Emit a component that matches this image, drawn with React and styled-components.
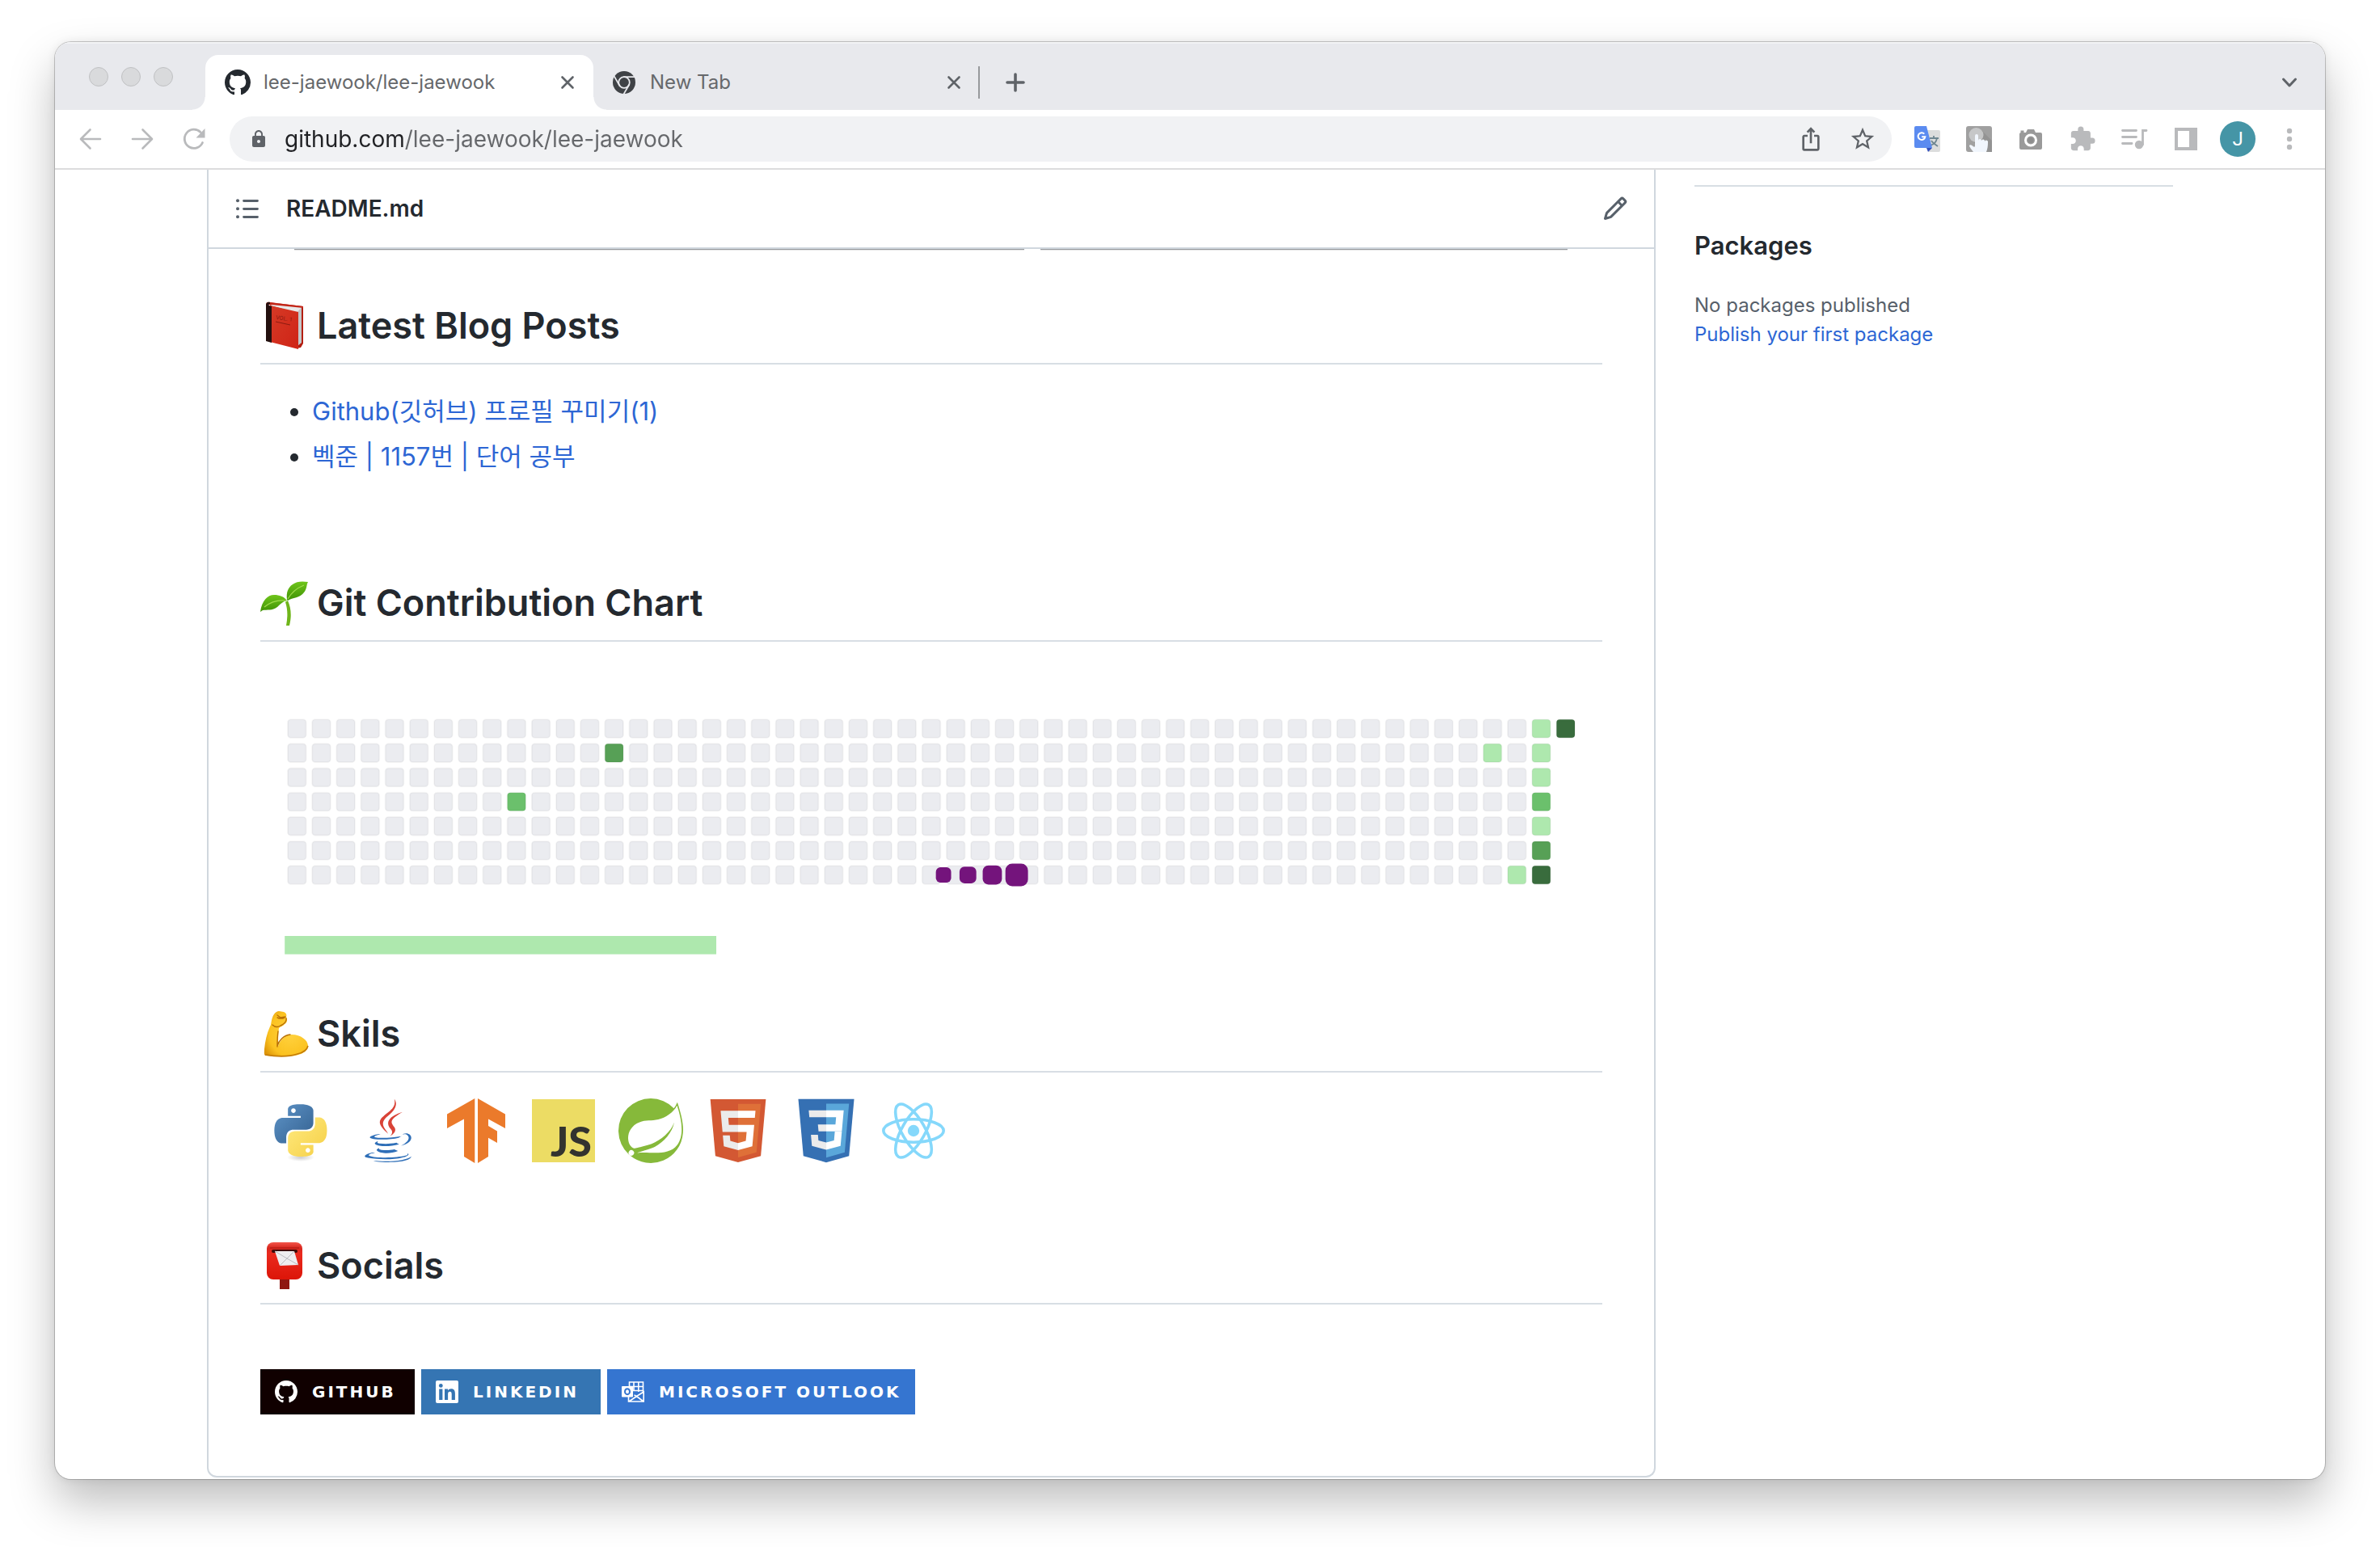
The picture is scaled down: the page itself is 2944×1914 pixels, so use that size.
import React from "react";
import styled, { createGlobalStyle } from "styled-components";
import { MdExtension, MdIosShare, MdLock, MdStarBorder } from "react-icons/md";
import { SiSpring } from "react-icons/si";

const color = {
  ink: "#24292f",
  muted: "#57606a",
  link: "#2d66d4",
  line: "#d8dee4",
  boxLine: "#d0d7de",
  chrome: "#e8e9ed",
  chromeText: "#66686b",
  chromeIcon: "#5f6368",
  chromeIdle: "#b9babc",
};

const GlobalStyle = createGlobalStyle`
  * { box-sizing: border-box; }
  body {
    margin: 0;
    background: #fff;
    color: ${color.ink};
    font-family: Inter, "Noto Sans CJK KR", "Noto Sans", sans-serif;
    overflow: hidden;
  }
  button { padding: 0; border: 0; background: none; color: inherit; font: inherit; cursor: pointer; }
  h1, h2, ul, p { margin: 0; padding: 0; }
  svg { display: block; flex: none; overflow: visible; }
`;

/* ---------- browser window ---------- */

const Desktop = styled.div`
  padding: 52px 68px 84px;
`;

const Window = styled.div`
  overflow: hidden;
  border-radius: 20px;
  background: #fff;
  box-shadow: 0 0 0 1px rgba(0, 0, 0, 0.2), 0 0 12px rgba(0, 0, 0, 0.08), 0 28px 56px rgba(0, 0, 0, 0.26);
`;

const TabStrip = styled.header`
  display: flex;
  align-items: center;
  height: 84px;
  padding-left: 42px;
  padding-right: 12px;
  background: ${color.chrome};
  color: ${color.chromeText};
  box-shadow: inset 0 2px 0 #f2f3f5;
`;

const Lights = styled.div`
  display: flex;
  gap: 16px;
  margin-top: 2px;
  margin-right: 40px;
`;

const Light = styled.button`
  width: 24px;
  height: 24px;
  && { border: 1px solid #c0c1c3; background: #d9dadc; }
  border-radius: 50%;
`;

const Tab = styled.div`
  position: relative;
  display: flex;
  align-items: center;
  align-self: flex-end;
  gap: 16px;
  width: ${(p) => (p.$active ? 480 : 478)}px;
  height: 68px;
  padding: 0 24px;
  border-radius: 16px 16px 0 0;
  background: ${(p) => (p.$active ? "#fff" : "transparent")};
  font-size: 24px;
  line-height: 32px;

  &::before,
  &::after {
    content: "";
    display: ${(p) => (p.$active ? "block" : "none")};
    position: absolute;
    bottom: 0;
    width: 16px;
    height: 16px;
  }
  &::before { left: -16px; background: radial-gradient(circle at 0 0, transparent 15px, #fff 16px); }
  &::after { right: -16px; background: radial-gradient(circle at 100% 0, transparent 15px, #fff 16px); }
`;

const TabTitle = styled.button`
  flex: 1;
  text-align: left;
  white-space: nowrap;
`;

const TabDivider = styled.span`
  width: 2px;
  height: 40px;
  margin-top: 16px;
  margin-left: -2px;
  background: #97999c;
`;

const StripButton = styled.button`
  display: grid;
  place-items: center;
  width: 64px;
  height: 68px;
  margin-top: 16px;
  margin-left: ${(p) => (p.$end ? "auto" : "12px")};
`;

const Toolbar = styled.div`
  display: flex;
  align-items: center;
  height: 74px;
  padding: 0 12px;
  border-bottom: 2px solid #dcdcdd;
`;

const ToolButton = styled.button`
  display: grid;
  place-items: center;
  flex: none;
  width: 64px;
  height: 56px;
  && { color: ${(p) => (p.$strong ? color.chromeIcon : color.chromeIdle)}; }
`;

const AddressBar = styled.label`
  display: flex;
  align-items: center;
  flex: 1;
  height: 56px;
  margin: 0 12px;
  padding: 0 4px 0 24px;
  border-radius: 28px;
  background: #f1f2f4;
  color: ${color.chromeIcon};
`;

const AddressInput = styled.input`
  flex: 1;
  min-width: 0;
  height: 40px;
  margin-left: 20px;
  padding: 0;
  border: 0;
  outline: 0;
  font: inherit;
  font-size: 28px;
  color: transparent;
  background: linear-gradient(90deg, #202124 148px, #66686b 148px);
  -webkit-background-clip: text;
  background-clip: text;
`;

const Avatar = styled.span`
  display: grid;
  place-items: center;
  width: 44px;
  height: 44px;
  border-radius: 50%;
  background: #4595a6;
  color: #fff;
  font: 24px/44px Roboto, sans-serif;
`;

/* ---------- page ---------- */

const Page = styled.div`
  display: grid;
  grid-template-columns: minmax(0, 1fr) 592px;
  column-gap: 48px;
  padding: 0 188px 2px;
`;

const Readme = styled.main`
  border: 2px solid ${color.boxLine};
  border-top: 0;
  border-radius: 0 0 12px 12px;
`;

const ReadmeBar = styled.div`
  display: flex;
  align-items: center;
  gap: 32px;
  height: 98px;
  padding: 0 32px;
  border-bottom: 2px solid ${color.boxLine};
`;

const FileName = styled.h1`
  flex: 1;
  font-size: 28px;
  line-height: 42px;
  font-weight: 600;
`;

const IconButton = styled.button`
  && { color: ${color.muted}; }
`;

const CardEdges = styled.div`
  display: grid;
  grid-template-columns: 904fr 652fr;
  gap: 20px;
  height: 1px;
  margin: 0 107px 0 106px;
`;

const CardEdge = styled.span`
  background: #97999d;
  box-shadow: 0 1px 1px rgba(0, 0, 0, 0.12);
`;

const Article = styled.article`
  padding: 64px 64px 76px;
`;

const Section = styled.section`
  margin-bottom: ${(p) => p.$after || 0}px;
`;

const Heading = styled.h2`
  display: flex;
  align-items: center;
  gap: 10px;
  height: 78px;
  padding-bottom: 16px;
  border-bottom: 2px solid ${color.line};
  font-size: 45px;
  line-height: 60px;
  font-weight: 600;
`;

const PostList = styled.ul`
  margin-top: 34px;
  padding-left: 64px;
  font-size: 31px;
  line-height: 48px;
`;

const Post = styled.li`
  & + & { margin-top: 8px; }
`;

const Link = styled.a`
  color: ${color.link};
  text-decoration: none;
`;

const Chart = styled.svg`
  width: 100%;
  height: auto;
  margin-top: 32px;
`;

const Skills = styled.div`
  display: flex;
  justify-content: space-between;
  max-width: 838px;
  margin-top: 32px;
  margin-left: 10px;
`;

const Badges = styled.div`
  display: flex;
  gap: 8px;
  margin-top: 80px;
`;

const Badge = styled.a`
  display: flex;
  align-items: center;
  gap: 18px;
  width: ${(p) => p.$width}px;
  height: 56px;
  padding-left: 18px;
  background: ${(p) => p.$bg};
  color: #fff;
  font: bold 20px/56px "DejaVu Sans", Verdana, sans-serif;
  letter-spacing: 3px;
  text-decoration: none;
  text-transform: uppercase;
  white-space: nowrap;
`;

const Sidebar = styled.aside`
  margin-top: 19px;
  border-top: 2px solid ${color.line};
  font-size: 24px;
  line-height: 36px;
  color: ${color.muted};
`;

const SideTitle = styled.h2`
  margin: 49px 0 32px;
  font-size: 31px;
  line-height: 48px;
  font-weight: 600;
  color: ${color.ink};
`;

/* ---------- icons ---------- */

const OCTOCAT =
  "M8 0C3.58 0 0 3.58 0 8c0 3.54 2.29 6.53 5.47 7.59.4.07.55-.17.55-.38 0-.19-.01-.82-.01-1.49-2.01.37-2.53-.49-2.69-.94-.09-.23-.48-.94-.82-1.13-.28-.15-.68-.52-.01-.53.63-.01 1.08.58 1.23.82.72 1.21 1.87.87 2.33.66.07-.52.28-.87.51-1.07-1.78-.2-3.64-.89-3.64-3.95 0-.87.31-1.59.82-2.15-.08-.2-.36-1.02.08-2.12 0 0 .67-.21 2.2.82.64-.18 1.32-.27 2-.27.68 0 1.36.09 2 .27 1.53-1.04 2.2-.82 2.2-.82.44 1.1.16 1.92.08 2.12.51.56.82 1.27.82 2.15 0 3.07-1.87 3.75-3.65 3.95.29.25.54.73.54 1.48 0 1.07-.01 1.93-.01 2.2 0 .21.15.46.55.38A8.013 8.013 0 0016 8c0-4.42-3.58-8-8-8z";

const GitHubMark = ({ size, fill = "currentColor" }) => (
  <svg width={size} height={size} viewBox="0 0 16 16" fill={fill}><path d={OCTOCAT} /></svg>
);

const ChromeMark = () => (
  <svg width="30" height="32" viewBox="-14 -16 30 32">
    <circle r="14" fill="#3f4246" />
    <g fill="none" stroke={color.chrome} strokeWidth="1.8">
      <circle r="6.8" />
      {[0, 120, 240].map((a) => <path key={a} d="M-1-6.8H13" transform={`rotate(${a})`} />)}
    </g>
  </svg>
);

const CloseIcon = () => (
  <svg width="16" height="16" viewBox="0 0 16 16" stroke={color.chromeIcon} strokeWidth="2.6" strokeLinecap="round">
    <path d="M1.5 1.5l13 13M14.5 1.5l-13 13" />
  </svg>
);

const PlusIcon = () => (
  <svg width="24" height="24" viewBox="0 0 24 24" stroke={color.chromeIcon} strokeWidth="3.6" strokeLinecap="round">
    <path d="M2 12h20M12 2v20" />
  </svg>
);

const ChevronIcon = () => (
  <svg width="20" height="12" viewBox="0 0 20 12" fill="none" stroke={color.chromeIcon} strokeWidth="3" strokeLinecap="round" strokeLinejoin="round">
    <path d="M2.5 2l7.5 8 7.5-8" />
  </svg>
);

const ArrowIcon = ({ flip }) => (
  <svg width="28" height="28" viewBox="0 0 28 28" fill="none" stroke="currentColor" strokeWidth="2.6" strokeLinecap="round" strokeLinejoin="round" transform={flip ? "scale(-1 1)" : undefined}>
    <path d="M26 14H2.5M13.5 2.5L2 14l11.500 11.500" />
  </svg>
);

const ReloadIcon = () => (
  <svg width="28" height="28" viewBox="0 0 28 28">
    <path d="M24.500 18.500A11.600 11.600 0 1 1 22 5.500" fill="none" stroke="currentColor" strokeWidth="2.800" strokeLinecap="round" />
    <path d="M27.500 1v11.500H16.500z" fill="currentColor" />
  </svg>
);

const TranslateIcon = () => (
  <svg width="32" height="32" viewBox="0 0 32 32">
    <path d="M12 5h18a2 2 0 0 1 2 2v23a2 2 0 0 1-2 2H18z" fill="#dcdddd" />
    <path d="M19 15h11M24 12v3M28 15c-1 5-5 8-8 9M21 18c2 3 5 5 8 7" stroke="#6f8792" strokeWidth="1.800" fill="none" />
    <path d="M2 0h13l7 27H2a2 2 0 0 1-2-2V2a2 2 0 0 1 2-2z" fill="#5b8bf0" />
    <path d="M15 27h7l-5 5z" fill="#3551bb" />
    <path d="M12.300 9.600A4.400 4.400 0 1 0 13.400 13.200H9.200" fill="none" stroke="#fff" strokeWidth="2" />
  </svg>
);

const TouchIcon = () => (
  <svg width="32" height="32" viewBox="0 0 32 32">
    <rect width="32" height="32" rx="3" fill="#a0a0a0" />
    <path d="M18 4l14 14v14H20L8 18z" fill="#939393" />
    <circle cx="12.500" cy="11" r="9" fill="#c6c7c8" />
    <path d="M11 12a2 2 0 0 1 4 0v6a2 2 0 0 1 4 0 2 2 0 0 1 4 1 2 2 0 0 1 4 1.500c0 4-.5 8-2 11.500H9c-2-3-5-6-5-8 1-2 4 0 5 1.500h2z" fill="#f1f6fd" />
  </svg>
);

const CameraIcon = () => (
  <svg width="32" height="32" viewBox="0 0 32 32">
    <path d="M2 10a2 2 0 0 1 1.500-2V5.500h4V8H10l2-4h8l2 4h6a2 2 0 0 1 2 2v17a2 2 0 0 1-2 2H4a2 2 0 0 1-2-2z" fill="#9a9a9a" />
    <circle cx="16" cy="17.500" r="6.500" fill="none" stroke="#fff" strokeWidth="3" />
    <circle cx="16" cy="17.500" r="3.500" fill="#8d8d8d" />
  </svg>
);

const MediaIcon = () => (
  <svg width="32" height="32" viewBox="0 0 32 32" stroke="currentColor" strokeWidth="2.800" strokeLinecap="round" fill="none">
    <path d="M1.500 5.500h17M1.500 13.500h17M1.500 21.500h11.500M26.500 23V5.500h4.500" />
    <circle cx="22" cy="23" r="3.800" fill="currentColor" />
  </svg>
);

const SidePanelIcon = () => (
  <svg width="28" height="28" viewBox="0 0 28 28"><path fillRule="evenodd" d="M0 0h28v28H0zM4 4v20h14V4z" fill="currentColor" /></svg>
);

const KebabIcon = () => (
  <svg width="8" height="28" viewBox="0 0 8 28" fill="currentColor"><circle cx="4" cy="4" r="3.200" /><circle cx="4" cy="14" r="3.200" /><circle cx="4" cy="24" r="3.200" /></svg>
);

const OutlineIcon = () => (
  <svg width="32" height="32" viewBox="0 0 32 32" stroke="currentColor" strokeWidth="2.800" strokeLinecap="round">
    <path d="M11.500 6.500h17M11.500 16.500h17M11.500 26.500h17" />
    <g fill="currentColor" stroke="none"><circle cx="4" cy="6.200" r="2" /><circle cx="4" cy="16.200" r="2" /><circle cx="4" cy="26.200" r="2" /></g>
  </svg>
);

const PencilIcon = () => (
  <svg width="32" height="32" viewBox="0 0 16 16" fill="currentColor">
    <path fillRule="evenodd" d="M11.013 1.427a1.750 1.750 0 012.474 0l1.086 1.086a1.750 1.750 0 010 2.474l-8.610 8.610c-.21.21-.47.364-.756.445l-3.251.93a.75.75 0 01-.927-.928l.929-3.250a1.750 1.750 0 01.445-.758l8.610-8.610zm1.414 1.060a.25.25 0 00-.354 0L10.811 3.750l1.439 1.440 1.263-1.263a.25.25 0 000-.354l-1.086-1.086zM11.189 6.250L9.750 4.810l-6.286 6.287a.25.25 0 00-.064.108l-.558 1.953 1.953-.558a.249.249 0 00.108-.064l6.286-6.286z" />
  </svg>
);

const BookEmoji = () => (
  <svg width="60" height="60" viewBox="0 0 60 60">
    <defs>
      <linearGradient id="cover" x1="0" y1="0" x2="1" y2="1"><stop stopColor="#d63a26" /><stop offset="1" stopColor="#cf2416" /></linearGradient>
    </defs>
    <path d="M10 1L53 6v46l-3 5-5 1z" fill="#b31d10" />
    <path d="M12 5l7-3 33 5-6 7z" fill="#e9e9e9" />
    <path d="M46 13l5-6v44l-5 4z" fill="#c3c7c9" />
    <path d="M7 4c0-3 2-4 5-3l41 5v2L14 4z" fill="#c32618" />
    <path d="M12 5l35 8v46L12 50z" fill="url(#cover)" />
    <path d="M7 4c0-3 3-4 5-3v2c-2 0-2 1-1 2l3 1v45l-7-2z" fill="#23100f" />
    <g fill="#8c1a10" fontFamily="Roboto, sans-serif"><text x="19" y="22" fontSize="7" fontWeight="400" transform="rotate(8 19 22)">VOL. 1</text></g>
    <path d="M19 25l18 4" stroke="#8c1a10" strokeWidth="1" />
  </svg>
);

const SeedlingEmoji = () => (
  <svg width="60" height="60" viewBox="0 -2 60 60">
    <defs>
      <linearGradient id="leaf" x1="0" y1="0" x2="0" y2="1"><stop stopColor="#6fc51b" /><stop offset="1" stopColor="#3f9205" /></linearGradient>
    </defs>
    <path d="M34 25c4 9 5 19 2 31h-4c2-11 2-20-1-29z" fill="#6fb51a" />
    <path d="M0 39c2-14 9-21 17-21 7 0 12 2 16 7-5 1-8 4-12 8-6 5-13 3-18 4z" fill="url(#leaf)" />
    <path d="M33 24c-1-9 1-15 7-19 5-4 12-4 19-3-2 3-1 8-5 13-5 7-14 6-20 10z" fill="url(#leaf)" />
    <path d="M5 33c7-6 16-9 27-8M34 23c4-7 10-13 20-17" stroke="#a0dc4c" strokeWidth="1.200" fill="none" />
  </svg>
);

const MuscleEmoji = () => (
  <svg width="60" height="60" viewBox="0 0 60 60">
    <defs>
      <radialGradient id="skin" cx=".6" cy=".5" r=".7"><stop stopColor="#ffd23f" /><stop offset=".7" stopColor="#fbc220" /><stop offset="1" stopColor="#dd9408" /></radialGradient>
    </defs>
    <path d="M20 3c3-2 6 0 9 0 3 1 4 4 3 6 2 4 1 8-2 9-2 3-5 3-7 5-1 7-1 15-1 22 2-6 8-14 17-14 11 0 20 7 20 14 0 9-14 13-27 13-8 0-17 0-25-1-3 0-2-4-2-8 1-10 3-20 8-30 1-6 2-13 7-16z" fill="url(#skin)" />
    <path d="M22 27c-1 7-1 13-1 19M21 45c2-7 8-13 16-14M15 19c3 3 7 3 10 1 4-2 8-5 7-9M21 7l4 3 6-1M21 10c4 2 7 1 9 0" stroke="#b87005" strokeWidth="1.400" fill="none" strokeLinecap="round" />
    <path d="M6 56c12 2 28 3 40-1 8-2 12-6 13-10" stroke="#c47c06" strokeWidth="1.600" fill="none" />
  </svg>
);

const PostboxEmoji = () => (
  <svg width="60" height="60" viewBox="0 0 60 60">
    <defs>
      <linearGradient id="box" x1="0" y1="0" x2="0" y2="1"><stop stopColor="#f2554a" /><stop offset=".15" stopColor="#d8271f" /><stop offset=".3" stopColor="#ea2a1e" /><stop offset="1" stopColor="#dc1508" /></linearGradient>
    </defs>
    <path d="M24 46h12v13H24z" fill="#8f1611" />
    <rect x="8" y="1" width="44" height="46" rx="8" fill="url(#box)" />
    <path d="M12 8h36" stroke="#a51912" strokeWidth="1.200" />
    <rect x="14" y="10" width="32" height="4" rx="2" fill="#3d0a08" />
    <path d="M18 12h24l5 17-23 1z" fill="#eeeef0" />
    <path d="M18 12l15 9 9-9M24 30l9-9 14 8" stroke="#bbbcc0" strokeWidth="1" fill="none" />
  </svg>
);

const PythonLogo = () => (
  <svg width="80" height="80" viewBox="0 0 80 80">
    <defs>
      <linearGradient id="pyBlue" x1="0" y1="0" x2="1" y2="1"><stop stopColor="#5e94c8" /><stop offset="1" stopColor="#33608f" /></linearGradient>
      <linearGradient id="pyGold" x1="0" y1="0" x2="1" y2="1"><stop stopColor="#ffea80" /><stop offset="1" stopColor="#f5cf45" /></linearGradient>
      <radialGradient id="pyShade"><stop stopColor="#000" stopOpacity=".2" /><stop offset="1" stopColor="#000" stopOpacity="0" /></radialGradient>
    </defs>
    <ellipse cx="40" cy="73" rx="17" ry="5" fill="url(#pyShade)" />
    <g transform="translate(7.500 7.200) scale(2.700)">
      <path fill="url(#pyBlue)" d="M14.250.18l.9.2.73.26.59.3.45.32.34.34.25.34.16.33.1.3.04.26.02.2-.01.13V8.500l-.05.63-.13.55-.21.46-.26.38-.3.31-.33.25-.35.19-.35.14-.33.1-.3.07-.26.04-.21.02H8.770l-.69.05-.59.14-.5.22-.41.27-.33.32-.27.35-.2.36-.15.37-.1.35-.07.32-.04.27-.02.21v3.060H3.170l-.21-.03-.28-.07-.32-.12-.35-.18-.36-.26-.36-.36-.35-.46-.32-.59-.28-.73-.21-.88-.14-1.050-.05-1.230.06-1.220.16-1.040.24-.87.32-.71.36-.57.4-.44.42-.33.42-.24.4-.16.36-.1.32-.05.24-.01h.16l.06.01h8.160v-.83H6.180l-.01-2.750-.02-.37.05-.34.11-.31.17-.28.25-.26.31-.23.38-.2.44-.18.51-.15.58-.12.64-.1.71-.06.77-.04.84-.02 1.270.05zm-6.300 1.980l-.23.33-.08.41.08.41.23.34.33.22.41.09.41-.09.33-.22.23-.34.08-.41-.08-.41-.23-.33-.33-.22-.41-.09-.41.09z" />
      <path fill="url(#pyGold)" d="M21.040 6.110l.28.06.32.12.35.18.36.27.36.35.35.47.32.59.28.73.21.88.14 1.040.05 1.230-.06 1.230-.16 1.040-.24.86-.32.71-.36.57-.4.45-.42.33-.42.24-.4.16-.36.09-.32.05-.24.02-.16-.01h-8.220v.82h5.840l.01 2.760.02.36-.05.34-.11.31-.17.29-.25.25-.31.24-.38.2-.44.17-.51.15-.58.13-.64.09-.71.07-.77.04-.84.01-1.270-.04-1.070-.14-.9-.2-.73-.25-.59-.3-.45-.33-.34-.34-.25-.34-.16-.33-.1-.3-.04-.25-.02-.2.01-.13v-5.340l.05-.64.13-.54.21-.46.26-.38.3-.32.33-.24.35-.2.35-.14.33-.1.3-.06.26-.04.21-.02.13-.01h5.840l.69-.05.59-.14.5-.21.41-.28.33-.32.27-.35.2-.36.15-.36.1-.35.07-.32.04-.28.02-.21V6.070h2.090l.14.01zm-6.470 14.250l-.23.33-.08.41.08.41.23.33.33.23.41.08.41-.08.33-.23.23-.33.08-.41-.08-.41-.23-.33-.33-.23-.41-.08-.41.08z" />
    </g>
  </svg>
);

const JavaLogo = () => (
  <svg width="80" height="80" viewBox="0 0 128 128">
    <g fill="#2f6fb8">
      <path d="M47.617 98.120s-4.767 2.774 3.397 3.710c9.892 1.130 14.947.968 25.845-1.092 0 0 2.871 1.795 6.873 3.351-24.439 10.470-55.308-.607-36.115-5.969zm-2.988-13.665s-5.348 3.959 2.823 4.805c10.567 1.091 18.910 1.180 33.354-1.600 0 0 1.993 2.025 5.132 3.131-29.542 8.640-62.446.68-41.309-6.336z" />
      <path d="M102.123 108.229s3.529 2.910-3.888 5.159c-14.102 4.272-58.706 5.560-71.094.171-4.451-1.938 3.899-4.625 6.526-5.192 2.739-.593 4.303-.485 4.303-.485-4.953-3.487-32.013 6.850-13.743 9.815 49.821 8.076 90.817-3.637 77.896-9.468zM49.912 70.294s-22.686 5.389-8.033 7.348c6.188.828 18.518.638 30.011-.326 9.390-.789 18.813-2.474 18.813-2.474s-3.308 1.419-5.704 3.053c-23.042 6.061-67.544 3.238-54.731-2.958 10.832-5.239 19.644-4.643 19.644-4.643zm40.697 22.747c23.421-12.167 12.591-23.860 5.032-22.285-1.848.385-2.677.72-2.677.72s.688-1.079 2-1.543c14.953-5.255 26.451 15.503-4.823 23.725 0-.002.359-.327.468-.617z" />
      <path d="M52.214 126.021c22.476 1.437 57-.8 57.817-11.436 0 0-1.571 4.032-18.577 7.231-19.186 3.612-42.854 3.191-56.887.874 0 .001 2.875 2.381 17.647 3.331z" />
    </g>
    <g fill="#d94337">
      <path d="M69.802 61.271c6.025 6.935-1.580 13.170-1.580 13.170s15.289-7.891 8.269-17.777c-6.559-9.215-11.587-13.792 15.635-29.580 0 .001-42.731 10.670-22.324 34.187z" />
      <path d="M76.491 1.587S89.459 14.563 64.188 34.510c-20.266 16.006-4.621 25.130-.007 35.559-11.831-10.673-20.509-20.070-14.688-28.815C58.041 28.420 81.722 22.195 76.491 1.587z" />
    </g>
  </svg>
);

const TensorFlowLogo = () => (
  <svg width="80" height="80" viewBox="0 0 80 80" fill="#eb7a2b">
    <path d="M38.300 0v80L25 72V25.500L4 37V19.500z" />
    <path d="M42 0l34 19.500V37L55 25.500v8.500l11 6.500V55l-11-6.200V72l-13 8z" />
  </svg>
);

const JavaScriptLogo = () => (
  <svg width="80" height="80" viewBox="0 0 80 80">
    <path d="M1 1h78v78H1z" fill="#ecdc64" />
    <text x="75" y="72" textAnchor="end" fontFamily="Lato, sans-serif" fontWeight="900" fontSize="52" fill="#33332f">JS</text>
  </svg>
);

const HtmlLogo = () => (
  <svg width="80" height="80" viewBox="0 0 128 128">
    <path fill="#d35833" d="M19.037 113.876L9.032 1.661h109.936l-10.016 112.198-45.019 12.480z" />
    <path fill="#df7038" d="M64 116.800l36.378-10.086 8.559-95.878H64z" />
    <path fill="#ebebeb" d="M64 52.455H45.788L44.530 38.361H64V24.599H29.489l.33 3.692 3.382 37.927H64zm0 35.743l-.061.017-15.327-4.140-.979-10.975H33.816l1.928 21.609 28.193 7.826.063-.017z" />
    <path fill="#fff" d="M63.952 52.455v13.763h16.947l-1.597 17.849-15.350 4.143v14.319l28.215-7.820.207-2.325 3.234-36.233.335-3.696h-3.708zm0-27.856v13.762h33.244l.276-3.092.628-6.978.329-3.692z" />
  </svg>
);

const CssLogo = () => (
  <svg width="80" height="80" viewBox="0 0 128 128">
    <path fill="#3570b3" d="M18.814 114.123L8.760 1.352h110.480l-10.064 112.754-45.243 12.543z" />
    <path fill="#5aa7da" d="M64.001 117.062l36.559-10.136 8.601-96.354h-45.160z" />
    <path fill="#fff" d="M64.001 51.429h18.302l1.264-14.163H64.001V23.435h34.682l-.332 3.711-3.400 38.114h-30.950zM81.127 64.675l-1.666 18.522-15.426 4.164v14.390l28.354-7.858.208-2.337 2.406-26.881z" />
    <path fill="#ebebeb" d="M64.083 87.349l-.061.018-15.403-4.159-.985-11.031H33.752l1.937 21.717 28.331 7.863.063-.018zM64.048 23.435v13.831H30.640l-.277-3.108-.63-7.012-.331-3.711zm-.047 27.996v13.831H48.792l-.277-3.108-.631-7.012-.33-3.711z" />
  </svg>
);

const ReactLogo = () => (
  <svg width="80" height="80" viewBox="-40 -40 80 80" fill="none" stroke="#85d8fb" strokeWidth="3.600">
    <circle r="7.200" fill="#85d8fb" stroke="none" />
    {[0, 60, 120].map((a) => <ellipse key={a} rx="37.200" ry="14.200" transform={`rotate(${a})`} />)}
  </svg>
);

const LinkedInMark = () => (
  <svg width="28" height="28" viewBox="0 0 28 28">
    <rect width="28" height="28" rx="2" fill="#fff" />
    <g fill="#3575b3"><circle cx="6.300" cy="6.400" r="2.400" /><path d="M4.200 10.500h4.200V24H4.200zM11 10.500h4v1.900c.8-1.400 2.200-2.200 4-2.200 4 0 4.900 2.600 4.900 6.200V24h-4.200v-6.700c0-1.700-.2-3.500-2.200-3.500-2.100 0-2.400 1.700-2.400 3.400V24H11z" /></g>
  </svg>
);

const OutlookMark = () => (
  <svg width="28" height="28" viewBox="0 0 28 28" fill="none" stroke="#fff" strokeWidth="1.600">
    <path d="M9.500 8V2h17v12M9.500 7.500h17M15 2v10.500M20.800 2v12M14 12.500h12.500M8.500 20v6h18.700V14l-8.700 5.500-3-1.500M9 26l9.500-6.500M27 26l-8.500-6.500" />
    <rect x="0" y="7" width="14" height="13.500" rx="1" fill="#fff" stroke="none" />
    <ellipse cx="7" cy="13.700" rx="3" ry="3.500" stroke="#3575d0" strokeWidth="2" />
  </svg>
);

/* ---------- contribution chart ---------- */

const LEVELS = ["#ebecf0", "#aee8ae", "#6bc06c", "#57a056", "#396c3d"];
const ACTIVE = {
  "9-3": 2, "13-1": 3, "49-1": 1, "50-6": 1,
  "51-0": 1, "51-1": 1, "51-2": 1, "51-3": 2, "51-4": 1, "51-5": 3, "51-6": 4, "52-0": 4,
};
const DAYS = Array.from({ length: 52 * 7 + 1 }, (_, i) => ({ week: Math.floor(i / 7), day: i % 7 }));
const SNAKE = [
  { x: 432, size: 10 },
  { x: 448, size: 11 },
  { x: 464, size: 12.6 },
  { x: 480, size: 14.8 },
];

const ContributionChart = () => (
  <Chart viewBox="-16 -32 880 192" role="img" aria-label="Contribution chart">
    {DAYS.map(({ week, day }) => (
      <rect key={`${week}-${day}`} x={week * 16 + 2} y={day * 16 + 2} width="12" height="12" rx="2"
        fill={LEVELS[ACTIVE[`${week}-${day}`] || 0]} stroke="#1b1f23" strokeOpacity=".04" />
    ))}
    {SNAKE.map(({ x, size }) => (
      <rect key={x} x={x - size / 2} y={104 - size / 2} width={size} height={size} rx={size * 0.3} fill="#74147c" />
    ))}
    <rect x="0" y="144" width="283" height="12" fill="#aee8ae" />
  </Chart>
);

const SpringLogo = () => <SiSpring size={80} color="#86b93a" />;

const SKILLS = [PythonLogo, JavaLogo, TensorFlowLogo, JavaScriptLogo, SpringLogo, HtmlLogo, CssLogo, ReactLogo];

export default function App() {
  return (
    <Desktop>
      <GlobalStyle />
      <Window>
        <TabStrip>
          <Lights>
            <Light aria-label="Close window" />
            <Light aria-label="Minimize window" />
            <Light aria-label="Zoom window" />
          </Lights>
          <Tab $active>
            <GitHubMark size={32} fill={color.ink} />
            <TabTitle>lee-jaewook/lee-jaewook</TabTitle>
            <button aria-label="Close tab"><CloseIcon /></button>
          </Tab>
          <Tab>
            <ChromeMark />
            <TabTitle>New Tab</TabTitle>
            <button aria-label="Close tab"><CloseIcon /></button>
          </Tab>
          <TabDivider />
          <StripButton aria-label="New tab"><PlusIcon /></StripButton>
          <StripButton $end aria-label="Search tabs"><ChevronIcon /></StripButton>
        </TabStrip>

        <Toolbar>
          <ToolButton aria-label="Back"><ArrowIcon /></ToolButton>
          <ToolButton aria-label="Forward"><ArrowIcon flip /></ToolButton>
          <ToolButton aria-label="Reload"><ReloadIcon /></ToolButton>
          <AddressBar>
            <MdLock size={24} />
            <AddressInput aria-label="Address" defaultValue="github.com/lee-jaewook/lee-jaewook" />
            <ToolButton $strong aria-label="Share"><MdIosShare size={32} /></ToolButton>
            <ToolButton $strong aria-label="Bookmark"><MdStarBorder size={34} /></ToolButton>
          </AddressBar>
          <ToolButton aria-label="Translate"><TranslateIcon /></ToolButton>
          <ToolButton aria-label="Touch"><TouchIcon /></ToolButton>
          <ToolButton aria-label="Capture"><CameraIcon /></ToolButton>
          <ToolButton aria-label="Extensions"><MdExtension size={34} /></ToolButton>
          <ToolButton aria-label="Media"><MediaIcon /></ToolButton>
          <ToolButton aria-label="Side panel"><SidePanelIcon /></ToolButton>
          <ToolButton aria-label="Profile"><Avatar>J</Avatar></ToolButton>
          <ToolButton aria-label="Menu"><KebabIcon /></ToolButton>
        </Toolbar>

        <Page>
          <Readme>
            <ReadmeBar>
              <IconButton aria-label="Outline"><OutlineIcon /></IconButton>
              <FileName>README.md</FileName>
              <IconButton aria-label="Edit"><PencilIcon /></IconButton>
            </ReadmeBar>
            <CardEdges><CardEdge /><CardEdge /></CardEdges>
            <Article>
              <Section $after={127}>
                <Heading><BookEmoji />Latest Blog Posts</Heading>
                <PostList>
                  <Post><Link href="#post-1">Github(깃허브) 프로필 꾸미기(1)</Link></Post>
                  <Post><Link href="#post-2">벡준 | 1157번 | 단어 공부</Link></Post>
                </PostList>
              </Section>
              <Section $after={61}>
                <Heading><SeedlingEmoji />Git Contribution Chart</Heading>
                <ContributionChart />
              </Section>
              <Section $after={97}>
                <Heading><MuscleEmoji />Skils</Heading>
                <Skills>{SKILLS.map((Logo, i) => <Logo key={i} />)}</Skills>
              </Section>
              <Section>
                <Heading><PostboxEmoji />Socials</Heading>
                <Badges>
                  <Badge href="#github" $bg="#100000" $width={191}><GitHubMark size={28} />GitHub</Badge>
                  <Badge href="#linkedin" $bg="#3575b3" $width={222}><LinkedInMark />LinkedIn</Badge>
                  <Badge href="#outlook" $bg="#3575d0" $width={381}><OutlookMark />Microsoft Outlook</Badge>
                </Badges>
              </Section>
            </Article>
          </Readme>
          <Sidebar>
            <SideTitle>Packages</SideTitle>
            <p>No packages published</p>
            <Link href="#publish">Publish your first package</Link>
          </Sidebar>
        </Page>
      </Window>
    </Desktop>
  );
}
